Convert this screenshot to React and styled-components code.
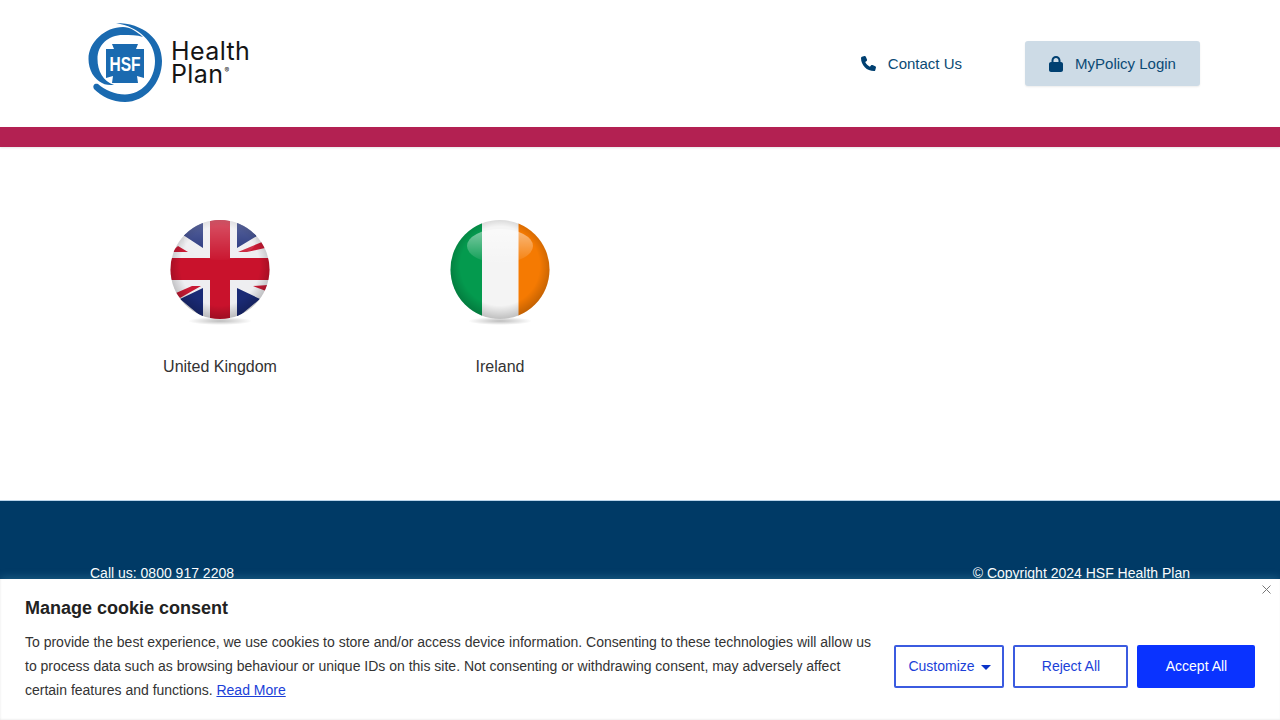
import styled, { createGlobalStyle } from 'styled-components'

const GlobalStyle = createGlobalStyle`
  html, body {
    margin: 0;
    padding: 0;
    height: 100%;
    overflow: hidden;
    background: #fff;
    font-family: "Liberation Sans", Arial, sans-serif;
  }
  * { box-sizing: border-box; }
`

const Logo = () => (
  <LogoWrap>
    <svg width="85" height="85" viewBox="0 0 85 85" aria-hidden="true">
      {/* outer sweep */}
      <path d="M31 3 C58 3 77 19 77 41 C77 63 60 82 40 82 C27 82 16 76 9 69 C7 65 10 63 13 64 C20 70 30 74.5 40 74.5 C56 74.5 70 60 70 41 C70 22 54 7 31 3 Z" fill="#1a6ab0" />
      {/* inner ring */}
      <path d="M58 17 C51 11 45 7 38 7 C20 7 3.5 22 3.5 39 C3.5 50 9 59 17 63 C20 65 25 65 29 65 C18 61 12.5 51 12.5 39 C12.5 25 23 15 38 15 C45 15 52 15 58 17 Z" fill="#1a6ab0" />
      {/* cross */}
      <path d="M27 24 L53 24 L51 29 L59 29 L59 58 L52 56 L53 63 L27 63 L28 56 L21 58 L21 29 L29 29 Z" fill="#1a6ab0" />
      <text x="40" y="50.5" textAnchor="middle" fontFamily="Liberation Sans, Arial, sans-serif" fontWeight="700" fontSize="20" fill="#fff" textLength="31" lengthAdjust="spacingAndGlyphs">HSF</text>
    </svg>
    <LogoText>
      <span>Health</span>
      <span>Plan<sup>®</sup></span>
    </LogoText>
  </LogoWrap>
)

const PhoneIcon = () => (
  <svg width="15" height="15" viewBox="0 0 512 512" aria-hidden="true">
    <path fill="#004071" d="M164.9 24.6c-7.7-18.6-28-28.5-47.4-23.2l-88 24C12.1 30.2 0 46 0 64C0 311.4 200.6 512 448 512c18 0 33.8-12.1 38.6-29.5l24-88c5.3-19.4-4.6-39.7-23.2-47.4l-96-40c-16.3-6.8-35.2-2.1-46.3 11.6L304.7 368C234.3 334.7 177.3 277.7 144 207.3L193.3 167c13.7-11.2 18.4-30 11.6-46.3l-40-96z" />
  </svg>
)

const LockIcon = () => (
  <svg width="14" height="16" viewBox="0 0 448 512" aria-hidden="true">
    <path fill="#004071" d="M144 144v48H304V144c0-44.2-35.8-80-80-80s-80 35.8-80 80zM80 192V144C80 64.5 144.5 0 224 0s144 64.5 144 144v48h16c35.3 0 64 28.7 64 64V448c0 35.3-28.7 64-64 64H64c-35.3 0-64-28.7-64-64V256c0-35.3 28.7-64 64-64H80z" />
  </svg>
)

const FlagDefs = ({ id }) => (
  <defs>
    <clipPath id={`${id}-clip`}>
      <circle cx="50" cy="49.5" r="49.5" />
    </clipPath>
    <radialGradient id={`${id}-shade`} cx="50%" cy="46%" r="52%">
      <stop offset="76%" stopColor="#000" stopOpacity="0" />
      <stop offset="100%" stopColor="#000" stopOpacity="0.2" />
    </radialGradient>
    <linearGradient id={`${id}-gloss`} x1="0" y1="0" x2="0" y2="1">
      <stop offset="0%" stopColor="#fff" stopOpacity="0.5" />
      <stop offset="100%" stopColor="#fff" stopOpacity="0.04" />
    </linearGradient>
    <radialGradient id={`${id}-drop`}>
      <stop offset="0%" stopColor="#000" stopOpacity="0.26" />
      <stop offset="100%" stopColor="#000" stopOpacity="0" />
    </radialGradient>
  </defs>
)

const UkFlag = () => (
  <svg width="100" height="106" viewBox="0 0 100 106" aria-hidden="true">
    <FlagDefs id="uk" />
    <ellipse cx="50" cy="101" rx="32" ry="4" fill="url(#uk-drop)" />
    <g clipPath="url(#uk-clip)">
      <rect width="100" height="100" fill="#eeeef1" />
      {/* blue triangles */}
      <path d="M10 13 L33 1 L33 28 Z M67 1 L90 14 L67 28 Z" fill="#1c2c78" />
      <path d="M10 79 L33 68 L33 98 Z M67 68 L90 79 L67 98 Z" fill="#1a2a75" />
      {/* red diagonals */}
      <path d="M68 32 L92 22 L95 28 L77 32 Z M1 32 L8 26 L18 32 Z" fill="#c91a34" />
      <path d="M10 78 L31 66 L22 66 L6 73 Z M83 66 L98 65 L96 71 Z" fill="#c91a34" />
      {/* cross */}
      <rect x="40" width="20" height="100" fill="#c9122c" />
      <rect y="38" width="100" height="22" fill="#c9122c" />
      <rect width="100" height="100" fill="url(#uk-shade)" />
      <ellipse cx="50" cy="20" rx="36" ry="20" fill="url(#uk-gloss)" opacity="0.55" />
    </g>
  </svg>
)

const IeFlag = () => (
  <svg width="100" height="106" viewBox="0 0 100 106" aria-hidden="true">
    <FlagDefs id="ie" />
    <ellipse cx="50" cy="101" rx="32" ry="4" fill="url(#ie-drop)" />
    <g clipPath="url(#ie-clip)">
      <rect width="32" height="100" fill="#049a4e" />
      <rect x="32" width="36.5" height="100" fill="#f4f4f4" />
      <rect x="68.5" width="31.5" height="100" fill="#f57a02" />
      <rect width="100" height="100" fill="url(#ie-shade)" />
      <ellipse cx="50" cy="26" rx="33" ry="17" fill="url(#ie-gloss)" />
    </g>
  </svg>
)

const countries = [
  { name: 'United Kingdom', Flag: UkFlag },
  { name: 'Ireland', Flag: IeFlag },
]

export default function App() {
  return (
    <Page>
      <GlobalStyle />
      <Header>
        <Logo />
        <Nav>
          <ContactLink href="#">
            <PhoneIcon />
            Contact Us
          </ContactLink>
          <LoginButton href="#">
            <LockIcon />
            MyPolicy Login
          </LoginButton>
        </Nav>
      </Header>
      <Stripe />
      <Main>
        {countries.map(({ name, Flag }) => (
          <Country key={name} href="#">
            <Flag />
            <span>{name}</span>
          </Country>
        ))}
      </Main>
      <Footer>
        <span>Call us: 0800 917 2208</span>
        <span>© Copyright 2024 HSF Health Plan</span>
      </Footer>

      <CookieBanner>
        <CloseButton aria-label="Close">
          <svg width="9" height="9" viewBox="0 0 9 9" aria-hidden="true">
            <path d="M0.5 0.5 L8.5 8.5 M8.5 0.5 L0.5 8.5" stroke="#777" strokeWidth="1" />
          </svg>
        </CloseButton>
        <CookieTitle>Manage cookie consent</CookieTitle>
        <CookieRow>
          <CookieText>
            To provide the best experience, we use cookies to store and/or access device information. Consenting to these technologies will allow us to process data such as browsing behaviour or unique IDs on this site. Not consenting or withdrawing consent, may adversely affect certain features and functions. <a href="#">Read More</a>
          </CookieText>
          <CookieActions>
            <CookieButton $width={110}>
              Customize <Caret />
            </CookieButton>
            <CookieButton $width={115}>Reject All</CookieButton>
            <CookieButton $width={118} $primary>Accept All</CookieButton>
          </CookieActions>
        </CookieRow>
      </CookieBanner>
    </Page>
  )
}

const Page = styled.div`
  position: relative;
  width: 1280px;
  height: 720px;
  overflow: hidden;
`

const Header = styled.header`
  height: 127px;
  padding: 0 80px 0 85px;
  display: flex;
  align-items: center;
  justify-content: space-between;
`

const LogoWrap = styled.div`
  display: flex;
  align-items: center;
  gap: 1px;
  margin-bottom: 2px;
`

const LogoText = styled.div`
  display: flex;
  flex-direction: column;
  margin-top: 1px;
  font-family: Inter, sans-serif;
  font-size: 25px;
  line-height: 23px;
  letter-spacing: 0.4px;
  color: #151515;

  sup {
    font-size: 7px;
    line-height: 0;
    vertical-align: 10px;
    margin-left: 1px;
  }
`

const Nav = styled.nav`
  display: flex;
  align-items: center;
  gap: 63px;
`

const ContactLink = styled.a`
  display: flex;
  align-items: center;
  gap: 12px;
  color: #0a4a75;
  font-size: 15px;
  text-decoration: none;
`

const LoginButton = styled.a`
  width: 175px;
  height: 45px;
  display: flex;
  align-items: center;
  justify-content: center;
  gap: 12px;
  color: #0a4a75;
  background: #cddbe6;
  border-radius: 3px;
  box-shadow: 0 1px 2px rgba(0, 0, 0, 0.08);
  font-size: 15px;
  text-decoration: none;
`

const Stripe = styled.div`
  height: 20px;
  background: #b32152;
  box-shadow: 0 1px 2px rgba(0, 0, 0, 0.1);
`

const Main = styled.main`
  height: 353px;
  padding: 73px 80px 0;
  display: grid;
  grid-template-columns: repeat(4, 280px);
  align-items: start;
`

const Country = styled.a`
  display: flex;
  flex-direction: column;
  align-items: center;
  gap: 29px;
  color: #333;
  font-size: 16px;
  line-height: 24px;
  text-decoration: none;
`

const Footer = styled.footer`
  height: 220px;
  padding: 64px 90px 0;
  display: flex;
  justify-content: space-between;
  align-items: flex-start;
  background: #003a66;
  border-top: 1px solid #b9d4ea;
  color: #fff;
  font-size: 14px;
  line-height: 16px;
`

const CookieBanner = styled.section`
  position: absolute;
  left: 0;
  right: 0;
  top: 579px;
  height: 141px;
  padding: 18px 25px 0;
  background: #fff;
  box-shadow: 0 -2px 8px rgba(120, 200, 220, 0.22), inset 0 -1px 2px rgba(0, 0, 0, 0.05), inset 1px 0 2px rgba(0, 0, 0, 0.03);
`

const CloseButton = styled.button`
  position: absolute;
  top: 6px;
  right: 9px;
  width: 9px;
  height: 9px;
  padding: 0;
  border: 0;
  background: none;
  display: flex;
`

const CookieTitle = styled.h2`
  margin: 0 0 11px;
  color: #222;
  font-size: 18px;
  font-weight: 700;
  line-height: 22px;
`

const CookieRow = styled.div`
  display: flex;
  align-items: center;
  justify-content: space-between;
`

const CookieText = styled.p`
  margin: 0;
  width: 850px;
  color: #333;
  font-size: 14px;
  line-height: 24px;

  a {
    color: #1b3fd8;
  }
`

const CookieActions = styled.div`
  display: flex;
  gap: 9px;
  margin-top: 1px;
`

const CookieButton = styled.button`
  width: ${(p) => p.$width}px;
  height: 43px;
  display: flex;
  align-items: center;
  justify-content: center;
  gap: 6px;
  padding: 0 0 2px 1px;
  border: 2px solid ${(p) => (p.$primary ? '#0a33ff' : '#3b5be0')};
  border-radius: 2px;
  background: ${(p) => (p.$primary ? '#0a33ff' : '#fff')};
  color: ${(p) => (p.$primary ? '#fff' : '#1b3fd8')};
  font-family: inherit;
  font-size: 14px;
`

const Caret = styled.i`
  width: 0;
  height: 0;
  margin-top: 3px;
  border-left: 5px solid transparent;
  border-right: 5px solid transparent;
  border-top: 5px solid #0a33c8;
`
